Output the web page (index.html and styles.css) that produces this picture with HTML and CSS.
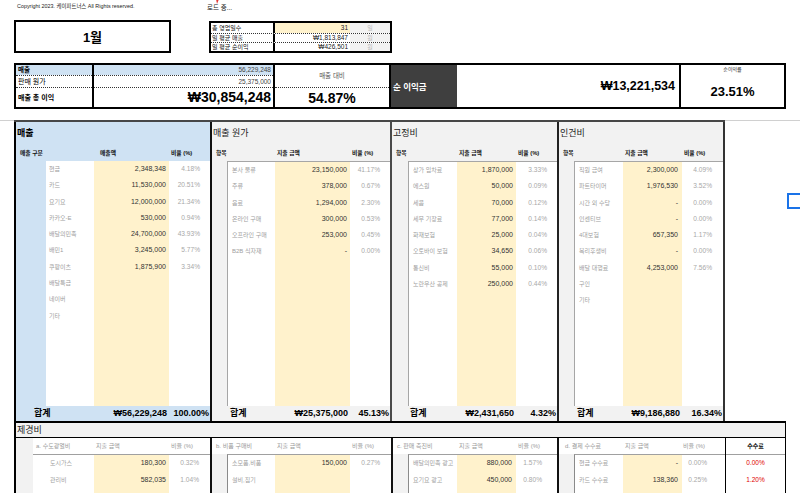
FILE: index.html
```html
<!DOCTYPE html>
<html lang="ko">
<head>
<meta charset="utf-8">
<title>월별 손익</title>
<link rel="stylesheet" href="styles.css">
</head>
<body>
<div class="topbar">
  <span class="copy">Copyright 2023. 케이파트너스 All Rights reserved.</span>
  <span class="loading">로드 중...<svg class="flag" width="5" height="6" viewBox="0 0 5 6"><path d="M1 0 L4 0 L2 5 Z" fill="#e53935"/></svg></span>
</div>

<div class="row1">
  <div class="month">1월</div>
  <div class="stats">
    <div class="st-row first"><span class="st-l">총 영업일수</span><span class="st-v yellow">31</span><span class="st-u">일</span></div>
    <div class="st-row"><span class="st-l">일 평균 매출</span><span class="st-v">₩1,813,847</span><span class="st-u">원</span></div>
    <div class="st-row"><span class="st-l">일 평균 순이익</span><span class="st-v">₩426,501</span><span class="st-u">원</span></div>
  </div>
</div>

<div class="row2">
  <div class="r2-col r2-labels">
    <div class="r2-c1 blue b">매출</div>
    <div class="r2-c2">판매 원가</div>
    <div class="r2-c3 b">매출 총 이익</div>
  </div>
  <div class="r2-col r2-vals">
    <div class="r2-c1 blue">56,229,248</div>
    <div class="r2-c2">25,375,000</div>
    <div class="r2-c3 big">₩30,854,248</div>
  </div>
  <div class="r2-col r2-ratio">
    <div class="r2-top">매출 대비</div>
    <div class="r2-bot big">54.87%</div>
  </div>
  <div class="r2-dark">순 이익금</div>
  <div class="r2-net">₩13,221,534</div>
  <div class="r2-rate">
    <div class="rate-l">순이익률</div>
    <div class="rate-v">23.51%</div>
  </div>
</div>

<div class="main">
  <div class="sections">
    <section class="sec sales">
      <div class="title b">매출</div>
      <div class="hd"><span>매출 구분</span><span>매출액</span><span>비율 (%)</span></div>
      <div class="box">
        <div class="r"><span class="lb">현금</span><span class="vl">2,348,348</span><span class="pc">4.18%</span></div>
        <div class="r"><span class="lb">카드</span><span class="vl">11,530,000</span><span class="pc">20.51%</span></div>
        <div class="r"><span class="lb">요기요</span><span class="vl">12,000,000</span><span class="pc">21.34%</span></div>
        <div class="r"><span class="lb">카카오-E</span><span class="vl">530,000</span><span class="pc">0.94%</span></div>
        <div class="r"><span class="lb">배달의민족</span><span class="vl">24,700,000</span><span class="pc">43.93%</span></div>
        <div class="r"><span class="lb">배민1</span><span class="vl">3,245,000</span><span class="pc">5.77%</span></div>
        <div class="r"><span class="lb">쿠팡이츠</span><span class="vl">1,875,900</span><span class="pc">3.34%</span></div>
        <div class="r"><span class="lb">배달특급</span><span class="vl"></span><span class="pc"></span></div>
        <div class="r"><span class="lb">네이버</span><span class="vl"></span><span class="pc"></span></div>
        <div class="r"><span class="lb">기타</span><span class="vl"></span><span class="pc"></span></div>
        <div class="r fill"><span class="lb"></span><span class="vl"></span><span class="pc"></span></div>
      </div>
      <div class="tot"><span>합계</span><span>₩56,229,248</span><span>100.00%</span></div>
    </section>

    <section class="sec cost">
      <div class="title">매출 원가</div>
      <div class="hd"><span>항목</span><span>지출 금액</span><span>비율 (%)</span></div>
      <div class="box">
        <div class="r"><span class="lb">본사 물류</span><span class="vl">23,150,000</span><span class="pc">41.17%</span></div>
        <div class="r"><span class="lb">주류</span><span class="vl">378,000</span><span class="pc">0.67%</span></div>
        <div class="r"><span class="lb">음료</span><span class="vl">1,294,000</span><span class="pc">2.30%</span></div>
        <div class="r"><span class="lb">온라인 구매</span><span class="vl">300,000</span><span class="pc">0.53%</span></div>
        <div class="r"><span class="lb">오프라인 구매</span><span class="vl">253,000</span><span class="pc">0.45%</span></div>
        <div class="r"><span class="lb">B2B 식자재</span><span class="vl">-</span><span class="pc">0.00%</span></div>
        <div class="r fill"><span class="lb"></span><span class="vl"></span><span class="pc"></span></div>
      </div>
      <div class="tot"><span>합계</span><span>₩25,375,000</span><span>45.13%</span></div>
    </section>

    <section class="sec fixed">
      <div class="title">고정비</div>
      <div class="hd"><span>항목</span><span>지출 금액</span><span>비율 (%)</span></div>
      <div class="box">
        <div class="r"><span class="lb">상가 임차료</span><span class="vl">1,870,000</span><span class="pc">3.33%</span></div>
        <div class="r"><span class="lb">에스원</span><span class="vl">50,000</span><span class="pc">0.09%</span></div>
        <div class="r"><span class="lb">세콤</span><span class="vl">70,000</span><span class="pc">0.12%</span></div>
        <div class="r"><span class="lb">세무 기장료</span><span class="vl">77,000</span><span class="pc">0.14%</span></div>
        <div class="r"><span class="lb">화재보험</span><span class="vl">25,000</span><span class="pc">0.04%</span></div>
        <div class="r"><span class="lb">오토바이 보험</span><span class="vl">34,650</span><span class="pc">0.06%</span></div>
        <div class="r"><span class="lb">통신비</span><span class="vl">55,000</span><span class="pc">0.10%</span></div>
        <div class="r"><span class="lb">노란우산 공제</span><span class="vl">250,000</span><span class="pc">0.44%</span></div>
        <div class="r fill"><span class="lb"></span><span class="vl"></span><span class="pc"></span></div>
      </div>
      <div class="tot"><span>합계</span><span>₩2,431,650</span><span>4.32%</span></div>
    </section>

    <section class="sec labor">
      <div class="title">인건비</div>
      <div class="hd"><span>항목</span><span>지출 금액</span><span>비율 (%)</span></div>
      <div class="box">
        <div class="r"><span class="lb">직원 급여</span><span class="vl">2,300,000</span><span class="pc">4.09%</span></div>
        <div class="r"><span class="lb">파트타이머</span><span class="vl">1,976,530</span><span class="pc">3.52%</span></div>
        <div class="r"><span class="lb">시간 외 수당</span><span class="vl">-</span><span class="pc">0.00%</span></div>
        <div class="r"><span class="lb">인센티브</span><span class="vl">-</span><span class="pc">0.00%</span></div>
        <div class="r"><span class="lb">4대보험</span><span class="vl">657,350</span><span class="pc">1.17%</span></div>
        <div class="r"><span class="lb">복리후생비</span><span class="vl">-</span><span class="pc">0.00%</span></div>
        <div class="r"><span class="lb">배달 대행료</span><span class="vl">4,253,000</span><span class="pc">7.56%</span></div>
        <div class="r"><span class="lb">구인</span><span class="vl"></span><span class="pc"></span></div>
        <div class="r"><span class="lb">기타</span><span class="vl"></span><span class="pc"></span></div>
        <div class="r fill"><span class="lb"></span><span class="vl"></span><span class="pc"></span></div>
      </div>
      <div class="tot"><span>합계</span><span>₩9,186,880</span><span>16.34%</span></div>
    </section>
  </div>
</div>

<div class="misc-title">제경비</div>

<div class="misc">
  <section class="msec ma">
    <div class="mhd"><span>a. 수도광열비</span><span>지출 금액</span><span>비율 (%)</span></div>
    <div class="mbox">
      <div class="mr"><span class="lb">도시가스</span><span class="vl">180,300</span><span class="pc">0.32%</span></div>
      <div class="mr"><span class="lb">관리비</span><span class="vl">582,035</span><span class="pc">1.04%</span></div>
      <div class="mr"><span class="lb"></span><span class="vl"></span><span class="pc"></span></div>
    </div>
  </section>
  <section class="msec mb">
    <div class="mhd"><span>b. 비품 구매비</span><span>지출 금액</span><span>비율 (%)</span></div>
    <div class="mbox">
      <div class="mr"><span class="lb">소모품,비품</span><span class="vl">150,000</span><span class="pc">0.27%</span></div>
      <div class="mr"><span class="lb">설비,집기</span><span class="vl"></span><span class="pc"></span></div>
      <div class="mr"><span class="lb"></span><span class="vl"></span><span class="pc"></span></div>
    </div>
  </section>
  <section class="msec mc">
    <div class="mhd"><span>c. 판매 촉진비</span><span>지출 금액</span><span>비율 (%)</span></div>
    <div class="mbox">
      <div class="mr"><span class="lb">배달의민족 광고</span><span class="vl">880,000</span><span class="pc">1.57%</span></div>
      <div class="mr"><span class="lb">요기요 광고</span><span class="vl">450,000</span><span class="pc">0.80%</span></div>
      <div class="mr"><span class="lb"></span><span class="vl"></span><span class="pc"></span></div>
    </div>
  </section>
  <section class="msec md">
    <div class="mhd"><span>d. 결제 수수료</span><span>지출 금액</span><span>비율 (%)</span></div>
    <div class="mbox">
      <div class="mr"><span class="lb">현금 수수료</span><span class="vl">-</span><span class="pc">0.00%</span></div>
      <div class="mr"><span class="lb">카드 수수료</span><span class="vl">138,360</span><span class="pc">0.25%</span></div>
      <div class="mr"><span class="lb"></span><span class="vl"></span><span class="pc"></span></div>
    </div>
  </section>
  <section class="fee">
    <div class="fee-h">수수료</div>
    <div class="fee-r">0.00%</div>
    <div class="fee-r">1.20%</div>
  </section>
</div>

<div class="cursor"></div>
</body>
</html>
```

FILE: styles.css
```css
* { box-sizing: border-box; }
html, body { margin: 0; padding: 0; }
body {
  width: 800px;
  height: 493px;
  overflow: hidden;
  position: relative;
  background: #fff;
  color: #000;
  font-family: "Liberation Sans", "Noto Sans CJK KR", sans-serif;
}
.b { font-weight: bold; }
.blue { background: #cfe2f3; }
.yellow { background: #fff2cc; }

/* top bar */
.topbar {
  height: 20px;
  display: flex;
  align-items: flex-start;
  padding-left: 17px;
}
.copy { width: 190px; font-size: 5.4px; line-height: 12px; color: #222; }
.loading { position: relative; font-size: 6.5px; line-height: 16px; color: #222; }
.flag { position: absolute; left: 8px; top: -1px; }

/* row 1 */
.row1 { display: flex; align-items: flex-start; margin-left: 14px; height: 33px; }
.month {
  width: 157px; height: 33px;
  border: 2px solid #000;
  display: flex; align-items: center; justify-content: center;
  font-size: 13px; font-weight: bold;
}
.stats { margin: 1px 0 0 38px; width: 183px; border: 2px solid #000; }
.st-row {
  display: grid;
  grid-template-columns: 64px 75px 40px;
  height: 9px;
  line-height: 8px;
  border-top: 1px dotted #333;
  font-size: 6px;
}
.st-row.first { height: 10px; line-height: 10px; border-top: 0; }
.st-l { padding-left: 1px; border-right: 2px solid #000; color: #111; white-space: nowrap; }
.st-v { text-align: right; padding-right: 2px; font-size: 6.5px; color: #222; }
.st-u { text-align: center; background: #f2f2f2; color: #bbb; }

/* row 2 */
.row2 {
  display: flex;
  margin: 10px 0 0 14px;
  width: 772px; height: 46px;
  border: 2px solid #000;
}
.r2-col { display: flex; flex-direction: column; border-right: 2px solid #000; }
.r2-labels { width: 78px; }
.r2-vals { width: 181px; }
.r2-ratio { width: 116px; }
.r2-c1 { height: 10px; line-height: 10px; font-size: 6.5px; }
.r2-c2 { height: 12px; line-height: 11px; font-size: 7px; border-top: 1px dotted #333; }
.r2-c3 { height: 20px; line-height: 19px; font-size: 7px; border-top: 1px dotted #333; }
.r2-labels > div { padding-left: 2px; }
.r2-vals > div { text-align: right; padding-right: 2px; color: #444; }
.r2-vals .r2-c1, .r2-vals .r2-c2 { font-size: 6.5px; }
.big { font-size: 14px !important; font-weight: bold; color: #000 !important; }
.r2-top { height: 22px; line-height: 22px; text-align: center; font-size: 6.5px; color: #555; }
.r2-bot { height: 20px; line-height: 20px; text-align: center; border-top: 1px dotted #333; }
.r2-dark {
  width: 66px;
  background: #3f3f3f; color: #fff;
  font-weight: bold; font-size: 8.5px;
  display: flex; align-items: center;
  padding-left: 2px;
}
.r2-net {
  width: 224px;
  border-right: 2px solid #000;
  display: flex; align-items: center; justify-content: flex-end;
  padding-right: 4px;
  font-size: 12.5px; font-weight: bold;
}
.r2-rate { width: 103px; display: flex; flex-direction: column; align-items: center; }
.rate-l { height: 9px; line-height: 9px; font-size: 5px; color: #333; }
.rate-v { padding-top: 6px; line-height: 24px; font-size: 13px; font-weight: bold; }

/* main sections */
.main { margin-top: 11px; border-top: 1px solid #d0d0d0; height: 301px; }
.sections {
  display: flex;
  margin: -1px 0 0 14px;
  height: 301px;
  border-top: 2px solid #474747;
  width: 711px;
}
.sec {
  display: grid;
  grid-template-columns: var(--s) var(--l) var(--v) var(--p);
  grid-template-rows: 23px 16px 1fr 15px;
  background: #f2f2f2;
  border-left: 2px solid #111;
}
.sales { --s: 30px; --l: 48px; --v: 75px; --p: 41px; background: #cfe2f3; border-left-color: #000; }
.cost  { --s: 15px; --l: 48px; --v: 75px; --p: 40px; }
.fixed { --s: 16px; --l: 49px; --v: 59px; --p: 41px; border-left-color: #4a4a4a; }
.labor { --s: 15px; --l: 49px; --v: 59px; --p: 41px; border-left-color: #222; border-right: 2px solid #333; }

.title { grid-column: 1 / -1; font-size: 9px; line-height: 23px; padding-left: 1px; color: #222; }
.sales .title { color: #000; }
.hd, .tot {
  grid-column: 1 / -1;
  display: grid;
  grid-template-columns: calc(var(--s) + var(--l)) var(--v) var(--p);
  white-space: nowrap;
}
.hd { font-size: 5.8px; font-weight: bold; line-height: 16px; color: #111; }
.hd span { padding-left: 2px; }
.hd span:first-child { padding-left: 4px; }
.sales .hd span:nth-child(2) { padding-left: 6px; }

.box {
  grid-column: 2 / -1;
  grid-row: 3;
  display: flex; flex-direction: column;
  background: #fff;
  border-left: 1px solid #a6a6a6;
  border-top: 1px solid #a6a6a6;
}
.sales .box { border: 0; }
.r {
  display: grid;
  grid-template-columns: 1fr var(--v) var(--p);
  height: 16.29px;
  line-height: 16.29px;
  flex: none;
}
.r.fill { flex: 1; }
.lb { font-size: 6px; color: #a0a0a0; padding-left: 4px; white-space: nowrap; overflow: hidden; }
.sales .lb { padding-left: 3px; }
.vl { background: #fff2cc; text-align: right; padding-right: 3px; font-size: 7px; color: #333; }
.labor .vl { padding-right: 4px; }
.pc { text-align: right; padding-right: 10px; font-size: 6.6px; color: #a8a8a8; }
.labor .pc { padding-right: 11px; }

.tot { grid-row: 4; font-size: 9px; font-weight: bold; line-height: 15px; }
.tot span:first-child { padding-left: 18px; }
.tot span:nth-child(2) { text-align: right; padding-right: 2px; }
.tot span:nth-child(3) { text-align: right; padding-right: 1px; }

/* misc */
.misc-title {
  margin-left: 14px;
  width: 772px; height: 17px;
  border-top: 2px solid #000;
  border-left: 2px solid #000;
  border-right: 1px solid #000;
  border-bottom: 1px solid #000;
  background: #f2f2f2;
  font-size: 9px; line-height: 14px;
  padding-left: 1px;
  color: #222;
}
.misc { display: flex; margin-left: 14px; width: 772px; height: 60px; }
.msec {
  display: grid;
  grid-template-columns: var(--s) var(--l) var(--v) var(--p);
  grid-template-rows: 16px 1fr;
  background: #f2f2f2;
  border-left: 2px solid #111;
}
.ma { --s: 17px; --l: 61px; --v: 75px; --p: 41px; --pp: 11px; border-left-color: #000; width: 196px; }
.mb { --s: 15px; --l: 48px; --v: 75px; --p: 41px; --pp: 11px; width: 181px; }
.mc { --s: 15px; --l: 49px; --v: 59px; --p: 41px; --pp: 15px; width: 166px; }
.md { --s: 15px; --l: 49px; --v: 59px; --p: 43px; --pp: 18px; width: 168px; }
.mhd {
  grid-column: 1 / -1; grid-row: 1;
  display: grid;
  grid-template-columns: calc(var(--s) + var(--l)) var(--v) var(--p);
  background: #fff;
  font-size: 6px; line-height: 16px; color: #999;
  white-space: nowrap;
}
.mhd span { padding-left: 2px; }
.mhd span:first-child { padding-left: 4px; }
.md .mhd span:first-child { padding-left: 6px; }
.md .mhd span:nth-child(3) { padding-left: 1px; }
.ma .mhd { grid-column: 2 / -1; grid-template-columns: var(--l) var(--v) var(--p); }
.ma .mhd span:first-child { padding-left: 3px; }
.mbox {
  grid-column: 2 / -1; grid-row: 2;
  background: #fff;
  border-top: 1px solid #a0a0a0;
  border-left: 1px solid #8a8a8a;
}
.ma .mbox { border-left: 0; }
.mr {
  display: grid;
  grid-template-columns: 1fr var(--v) var(--p);
  height: 16.7px; line-height: 16.7px;
}
.ma .lb { padding-left: 17px; }
.msec .vl { padding-right: 3px; }
.mc .vl, .md .vl { padding-right: 4px; }
.msec .pc { padding-right: var(--pp); }

.fee {
  width: 61px;
  border-left: 1px solid #000;
  border-right: 1px solid #000;
  display: flex; flex-direction: column;
}
.fee-h {
  height: 17px; line-height: 16px;
  text-align: center;
  font-size: 6px; font-weight: bold; color: #222;
  border-bottom: 1px solid #a0a0a0;
}
.fee-r { height: 16.7px; line-height: 16.7px; text-align: center; font-size: 6.5px; color: #e00000; }

/* selected cell overlay */
.cursor {
  position: absolute;
  left: 787px; top: 193px;
  width: 22px; height: 16px;
  border: 2px solid #1a73e8;
}
```
